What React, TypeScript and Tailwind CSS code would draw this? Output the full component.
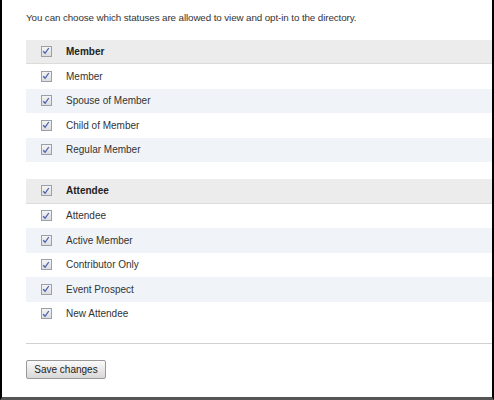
import React from 'react';

const groups = [
  {
    title: 'Member',
    items: ['Member', 'Spouse of Member', 'Child of Member', 'Regular Member'],
  },
  {
    title: 'Attendee',
    items: ['Attendee', 'Active Member', 'Contributor Only', 'Event Prospect', 'New Attendee'],
  },
];

function Check() {
  return (
    <span className="flex h-[11px] w-[11px] items-center justify-center border border-[#9aa0aa] bg-gradient-to-b from-[#f4f4f4] to-[#dcdde0]">
      <svg width="8" height="8" viewBox="0 0 8 8" fill="none">
        <path d="M1.2 4.2 L3.1 6.3 L6.8 1" stroke="#4b5fb0" strokeWidth="1.3" />
      </svg>
    </span>
  );
}

function Row({ label, header, alt }: { label: string; header?: boolean; alt?: boolean }) {
  const bg = header ? 'bg-[#ececec] border-b border-[#dcdcdc]' : alt ? 'bg-[#f0f3f8]' : 'bg-white';
  return (
    <div className={`flex h-[24.5px] items-center ${bg}`}>
      <div className="flex w-[40px] justify-center">
        <Check />
      </div>
      <span className={header ? 'font-bold text-[#222]' : 'text-[#333]'}>{label}</span>
    </div>
  );
}

export default function App() {
  return (
    <div
      className="h-[400px] w-[494px] overflow-hidden border-x-2 border-b-[3px] border-x-black border-b-[#555] bg-white text-[10px]"
      style={{ fontFamily: '"Liberation Sans", Arial, sans-serif' }}
    >
      <div className="pl-[24px] pt-[11px]">
        <p className="text-[9.8px] tracking-[-0.1px] text-[#333]">
          You can choose which statuses are allowed to view and opt-in to the directory.
        </p>
        <div className="mt-[14px]">
          {groups.map((g, gi) => (
            <div key={g.title} className={gi > 0 ? 'mt-[17px]' : ''}>
              <Row label={g.title} header />
              {g.items.map((it, i) => (
                <Row key={it} label={it} alt={i % 2 === 1} />
              ))}
            </div>
          ))}
        </div>
        <div className="mt-[17px] border-t border-[#d0d0d0]" />
        <button className="mt-[16px] h-[19px] w-[80px] rounded-[2px] border border-[#999] bg-gradient-to-b from-[#fafafa] to-[#d8d8d8] text-[10px] text-[#222]">
          Save changes
        </button>
      </div>
    </div>
  );
}
